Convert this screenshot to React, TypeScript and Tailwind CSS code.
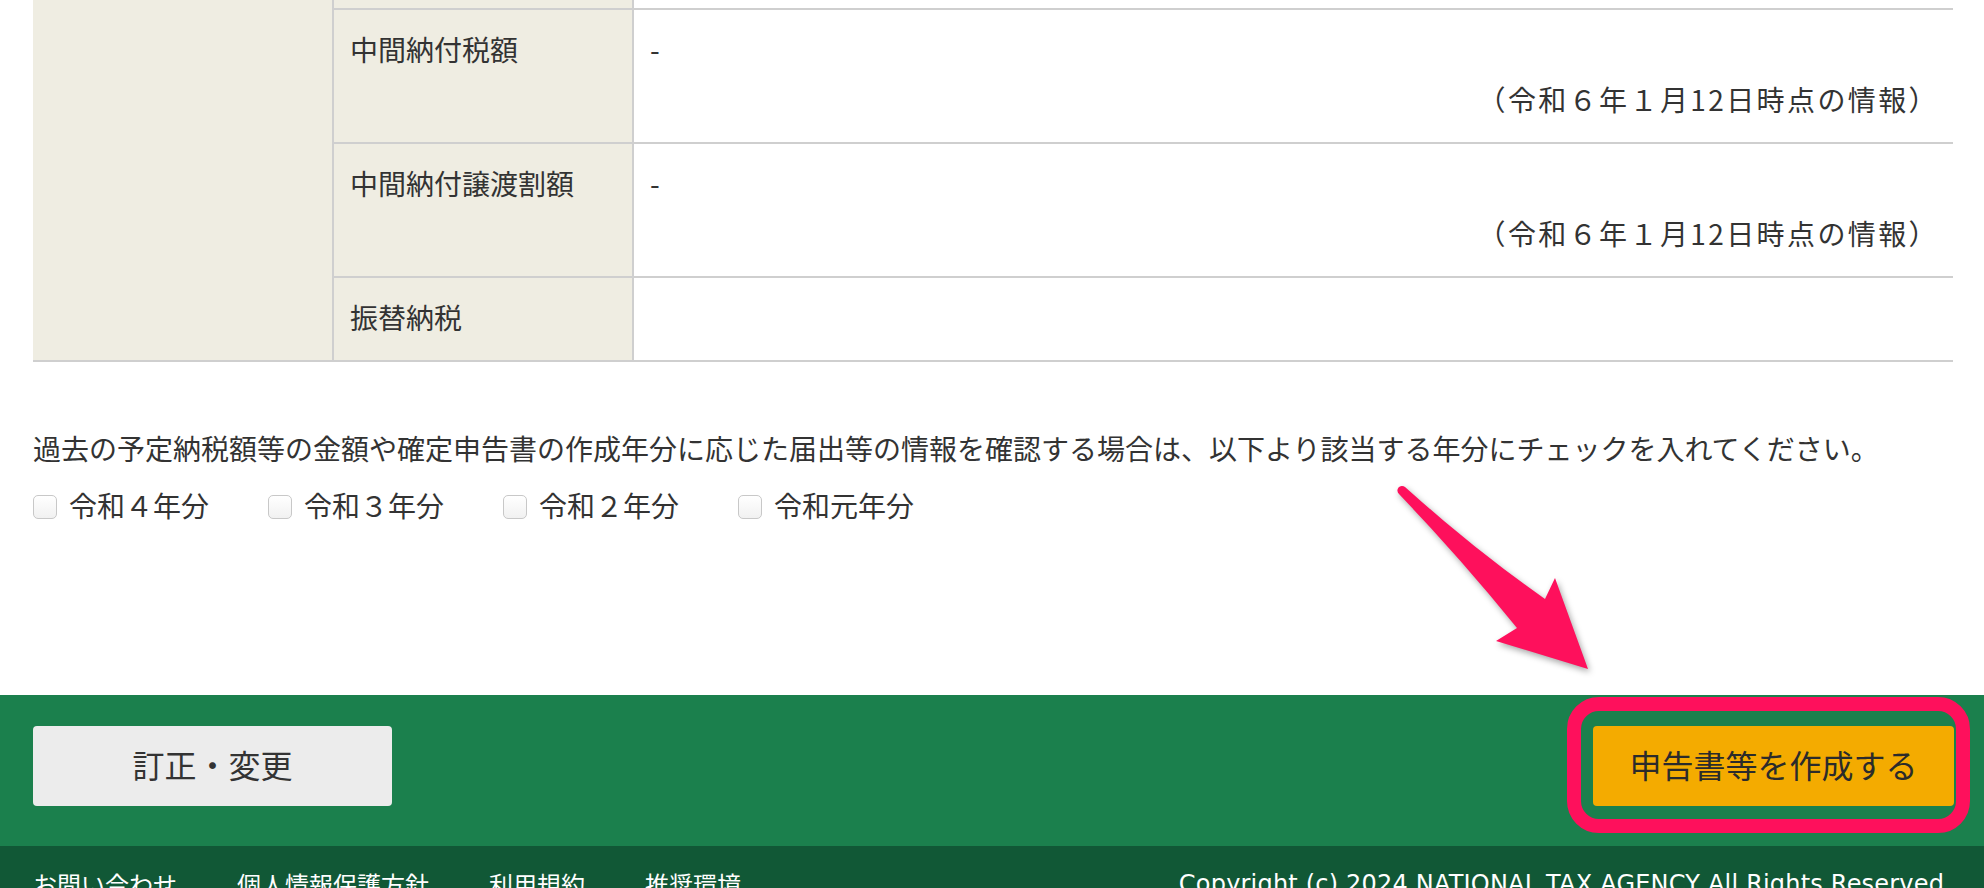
const rows = [
  { label: "中間納付税額", value: "-", note: "（令和６年１月12日時点の情報）" },
  { label: "中間納付譲渡割額", value: "-", note: "（令和６年１月12日時点の情報）" },
  { label: "振替納税", value: "", note: "" },
];

const years = ["令和４年分", "令和３年分", "令和２年分", "令和元年分"];

const links = ["お問い合わせ", "個人情報保護方針", "利用規約", "推奨環境"];

export default function App() {
  return (
    <div className="relative h-[888px] overflow-hidden bg-white text-[#333] font-['Noto_Sans_CJK_JP',sans-serif]">
      <div className="pl-[33px] pr-[31px]">
        {/* table */}
        <div className="flex border-b-2 border-[#cfcfcf]">
          <div className="w-[301px] shrink-0 border-r-2 border-[#cfcfcf] bg-[#efede2]" />
          <div className="flex-1">
            <div className="flex h-[8px]">
              <div className="w-[300px] shrink-0 border-r-2 border-[#cfcfcf] bg-[#efede2]" />
              <div className="flex-1" />
            </div>
            {rows.map((r) => (
              <div key={r.label} className="flex border-t-2 border-[#cfcfcf] text-[28px] leading-[50px]">
                <div className="w-[300px] shrink-0 border-r-2 border-[#cfcfcf] bg-[#efede2] px-[16px] pt-[14px] pb-[18px]">
                  {r.label}
                </div>
                <div className="flex-1 px-[16px] pt-[14px] pb-[18px]">
                  <div className="h-[50px]">{r.value}</div>
                  {r.note && <div className="text-right tracking-[2.4px] -mr-[2px]">{r.note}</div>}
                </div>
              </div>
            ))}
          </div>
        </div>

        <p className="mt-[61px] text-[28px] leading-[50px]">
          過去の予定納税額等の金額や確定申告書の作成年分に応じた届出等の情報を確認する場合は、以下より該当する年分にチェックを入れてください。
        </p>
        <div className="mt-[7px] flex h-[50px] items-center gap-[59px] text-[28px]">
          {years.map((y) => (
            <label key={y} className="flex items-center">
              <span className="mt-[3px] h-[24px] w-[24px] rounded-[5px] border border-[#c8c8c8] bg-gradient-to-b from-white to-[#f1f1f1]" />
              <span className="ml-[12px] leading-[50px]">{y}</span>
            </label>
          ))}
        </div>
      </div>

      {/* action bar */}
      <div className="mt-[165px] flex justify-between bg-[#1b804d] pl-[33px] pr-[30px] pt-[31px] pb-[40px]">
        <button className="h-[80px] w-[359px] rounded-[4px] bg-[#ececec] pb-[4px] text-[32px] text-[#333]">
          訂正・変更
        </button>
        <button className="h-[80px] w-[361px] rounded-[4px] bg-[#f4ab00] pb-[4px] text-[32px] text-[#2b2b2b]">
          申告書等を作成する
        </button>
      </div>

      {/* footer */}
      <div className="flex h-[80px] justify-between bg-[#115836] pl-[33px] pr-[32px] pt-[20px] text-[24px] leading-[36px] text-white">
        <div className="flex gap-[60px]">
          {links.map((l) => (
            <a key={l}>{l}</a>
          ))}
        </div>
        <div className="font-['DejaVu_Sans',sans-serif] tracking-[0.2px]">
          Copyright (c) 2024 NATIONAL TAX AGENCY All Rights Reserved.
        </div>
      </div>

      {/* annotation: highlight ring */}
      <div className="pointer-events-none absolute left-[1567px] top-[697px] h-[136px] w-[403px] rounded-[32px] border-[14px] border-[#fe105c]" />

      {/* annotation: arrow */}
      <svg
        className="pointer-events-none absolute left-0 top-0 drop-shadow-[2px_3px_3px_rgba(0,0,0,0.35)]"
        width="1984"
        height="888"
        viewBox="0 0 1984 888"
      >
        <path
          d="M1405 487 Q1475 550 1545 599 L1555 578 L1588 669 L1496 641 L1517 628 Q1462 560 1399 494 A4.5 4.5 0 0 1 1405 487 Z"
          fill="#fe105c"
        />
      </svg>
    </div>
  );
}
